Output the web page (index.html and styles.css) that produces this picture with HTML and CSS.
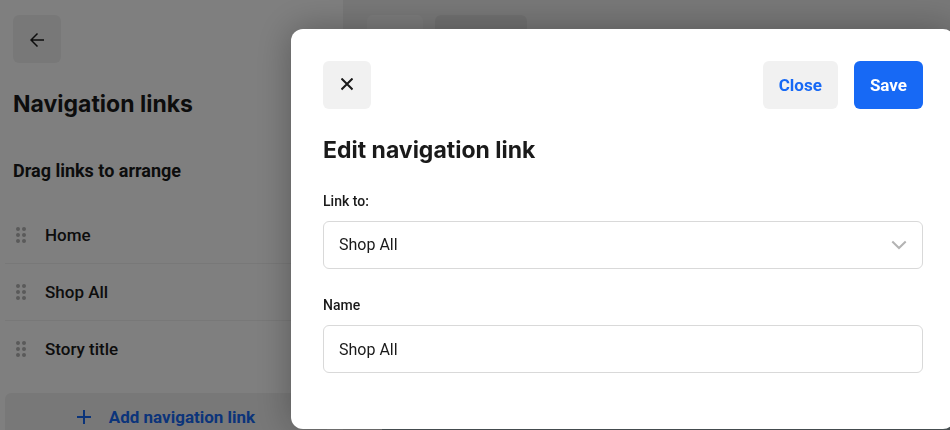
FILE: index.html
```html
<!DOCTYPE html>
<html lang="en">
<head>
    <meta charset="UTF-8">
    <meta name="viewport" content="width=device-width, initial-scale=1.0">
    <title>Edit navigation link</title>
    <link rel="stylesheet" href="styles.css">
</head>
<body>
    <div class="app">
        <aside class="sidebar">
            <button class="icon-button" type="button" aria-label="Back">
                <svg width="14" height="16" viewBox="0 -2 14 16" fill="none" stroke="currentColor" stroke-width="1.5">
                    <path d="M14 7H1M7.500 .5L1 7l6.500 6.500"/>
                </svg>
            </button>
            <h1 class="title">Navigation links</h1>
            <h2 class="subtitle">Drag links to arrange</h2>

            <ul class="link-list">
                <li class="link-item">
                    <svg class="handle" width="10" height="16" viewBox="0 0 10 16" fill="currentColor">
                        <circle cx="2" cy="2" r="2"/><circle cx="8" cy="2" r="2"/>
                        <circle cx="2" cy="8" r="2"/><circle cx="8" cy="8" r="2"/>
                        <circle cx="2" cy="14" r="2"/><circle cx="8" cy="14" r="2"/>
                    </svg>
                    Home
                </li>
                <li class="link-item">
                    <svg class="handle" width="10" height="16" viewBox="0 0 10 16" fill="currentColor">
                        <circle cx="2" cy="2" r="2"/><circle cx="8" cy="2" r="2"/>
                        <circle cx="2" cy="8" r="2"/><circle cx="8" cy="8" r="2"/>
                        <circle cx="2" cy="14" r="2"/><circle cx="8" cy="14" r="2"/>
                    </svg>
                    Shop All
                </li>
                <li class="link-item">
                    <svg class="handle" width="10" height="16" viewBox="0 0 10 16" fill="currentColor">
                        <circle cx="2" cy="2" r="2"/><circle cx="8" cy="2" r="2"/>
                        <circle cx="2" cy="8" r="2"/><circle cx="8" cy="8" r="2"/>
                        <circle cx="2" cy="14" r="2"/><circle cx="8" cy="14" r="2"/>
                    </svg>
                    Story title
                </li>
            </ul>

            <button class="add-button" type="button">
                <svg width="14" height="14" viewBox="0 0 14 14" fill="none" stroke="currentColor" stroke-width="2">
                    <path d="M7 0v14M0 7h14"/>
                </svg>
                Add navigation link
            </button>
        </aside>

        <main class="preview">
            <div class="tabs">
                <span class="tab"></span>
                <span class="tab wide"></span>
            </div>
            <div class="hero"></div>
        </main>
    </div>

    <div class="overlay">
        <form class="dialog" role="dialog" aria-labelledby="dialog-title">
            <div class="toolbar">
                <button class="icon-button" type="button" aria-label="Dismiss">
                    <svg width="12" height="14" viewBox="0 0 12 14" fill="none" stroke="currentColor" stroke-width="2">
                        <path d="M.5 .5l11 11M11.500 .5l-11 11"/>
                    </svg>
                </button>
                <div class="actions">
                    <button class="button" type="button">Close</button>
                    <button class="button primary" type="submit">Save</button>
                </div>
            </div>

            <h2 class="title" id="dialog-title">Edit navigation link</h2>

            <div class="field">
                <label for="link-to">Link to:</label>
                <div class="select">
                    <select class="control" id="link-to">
                        <option>Shop All</option>
                        <option>Home</option>
                        <option>Story title</option>
                    </select>
                    <svg class="chevron" width="16" height="10" viewBox="0 0 16 10" fill="none" stroke="currentColor" stroke-width="2">
                        <path d="M1.300 1.500L8 8l6.700-6.500"/>
                    </svg>
                </div>
            </div>

            <div class="field">
                <label for="link-name">Name</label>
                <input class="control" id="link-name" type="text" value="Shop All">
            </div>
        </form>
    </div>
</body>
</html>
```

FILE: styles.css
```css
:root {
    --text: #1a1a1a;
    --blue: #1769f5;
    --gray: #f1f1f1;
    --line: #d9d9d9;
}

* {
    box-sizing: border-box;
}

body {
    margin: 0;
    height: 100vh;
    overflow: hidden;
    color: var(--text);
    background: #fff;
    font: 16px/24px Roboto, sans-serif;
}

button,
input,
select {
    font: inherit;
    color: inherit;
}

h1,
h2 {
    margin: 0;
}

.app {
    display: grid;
    grid-template-columns: 343px 1fr;
    height: 100vh;
}

.sidebar {
    padding: 15px 16px 0 5px;
    overflow: hidden;
}

.sidebar > .icon-button,
.sidebar > .title,
.sidebar > .subtitle {
    margin-left: 8px;
}

.icon-button {
    display: flex;
    align-items: center;
    justify-content: center;
    width: 48px;
    height: 48px;
    padding: 0;
    border: 0;
    border-radius: 6px;
    background: var(--gray);
}

.title {
    margin-top: 25px;
    font: 700 23px/32px Inter, sans-serif;
}

.subtitle {
    margin-top: 39px;
    font: 700 18px/24px Roboto, sans-serif;
}

.link-list {
    list-style: none;
    margin: 24px 0 15px;
    padding: 0;
}

.link-item {
    display: flex;
    align-items: center;
    gap: 19px;
    height: 57px;
    padding-left: 11px;
    font-size: 17px;
    font-weight: 500;
    border-bottom: 1px solid #f1f1f1;
}

.link-item:last-child {
    border-bottom-color: transparent;
}

.handle {
    color: #b4b4b4;
}

.add-button {
    display: flex;
    align-items: center;
    justify-content: center;
    gap: 18px;
    width: 100%;
    height: 48px;
    padding: 0;
    border: 0;
    border-radius: 6px;
    background: var(--gray);
    color: var(--blue);
    font-size: 17px;
    font-weight: 700;
}

.preview {
    display: flex;
    flex-direction: column;
    background: #f1f1f1;
}

.tabs {
    display: flex;
    gap: 12px;
    padding: 15px 24px;
}

.tab {
    width: 56px;
    height: 48px;
    border-radius: 6px;
    background: #f9f9f9;
}

.tab.wide {
    width: 92px;
    background: #e3e3e3;
}

.hero {
    flex: 1;
    margin-left: 39px;
    background: #9fb0b6;
}

.overlay {
    position: fixed;
    inset: 0;
    overflow: hidden;
    background: rgba(0, 0, 0, 0.5);
}

/* the sheet runs slightly past the right edge of the window */
.dialog {
    margin: 29px -5px 0 291px;
    padding: 32px 32px 56px;
    border-radius: 12px;
    background: #fff;
    box-shadow: 0 0 36px rgba(0, 0, 0, 0.3);
}

.toolbar {
    display: flex;
    justify-content: space-between;
}

.actions {
    display: flex;
    gap: 16px;
}

.button {
    height: 48px;
    padding: 0 16px;
    border: 0;
    border-radius: 6px;
    background: var(--gray);
    color: var(--blue);
    font-size: 17px;
    font-weight: 700;
}

.button.primary {
    background: var(--blue);
    color: #fff;
}

.field {
    margin-top: 24px;
}

.title + .field {
    margin-top: 23px;
}

.field label {
    display: block;
    margin-bottom: 8px;
    font-size: 14px;
    font-weight: 500;
}

.select {
    position: relative;
}

.control {
    display: block;
    width: 100%;
    height: 48px;
    padding: 0 15px;
    border: 1px solid var(--line);
    border-radius: 6px;
    background: #fff;
    appearance: none;
}

.chevron {
    position: absolute;
    top: 19px;
    right: 16px;
    color: #b3b3b3;
    pointer-events: none;
}
```
